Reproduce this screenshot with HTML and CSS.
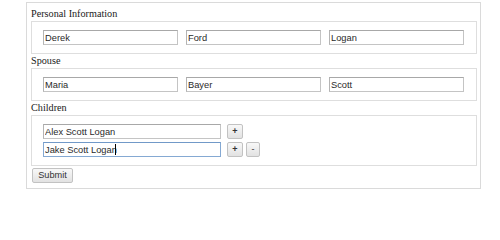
FILE: index.html
```html
<!DOCTYPE html>
<html>
<head>
<meta charset="utf-8">
<link rel="stylesheet" href="styles.css">
</head>
<body>
<form class="form">
  <div class="legend">Personal Information</div>
  <div class="box">
    <div class="row3">
      <input class="field" type="text" value="Derek">
      <input class="field" type="text" value="Ford">
      <input class="field" type="text" value="Logan">
    </div>
  </div>
  <div class="legend">Spouse</div>
  <div class="box">
    <div class="row3">
      <input class="field" type="text" value="Maria">
      <input class="field" type="text" value="Bayer">
      <input class="field" type="text" value="Scott">
    </div>
  </div>
  <div class="legend">Children</div>
  <div class="box children">
    <div class="child-row">
      <input class="field wide" type="text" value="Alex Scott Logan">
      <button class="btn plus" type="button">+</button>
    </div>
    <div class="child-row">
      <span class="caret-wrap">
        <input class="field wide focused" type="text" value="Jake Scott Logan">
        <span class="caret"></span>
      </span>
      <button class="btn plus" type="button">+</button>
      <button class="btn minus" type="button">-</button>
    </div>
  </div>
  <button class="btn submit" type="button">Submit</button>
</form>
</body>
</html>
```

FILE: styles.css
```css
html, body {
  margin: 0;
  padding: 0;
  background: #ffffff;
}

.form {
  display: flex;
  flex-direction: column;
  align-items: flex-start;
  box-sizing: border-box;
  width: 455px;
  margin: 2px 0 0 26px;
  padding: 4px 3px 5px 4px;
  border: 1px solid #dadada;
}

.legend {
  height: 14px;
  line-height: 14px;
  font-family: "Liberation Serif", "Times New Roman", serif;
  font-size: 10.2px;
  color: #1a1a1a;
  white-space: nowrap;
}

.box {
  box-sizing: border-box;
  width: 446px;
  padding: 8px 12px 8px 11px;
  border: 1px solid #dedede;
}

.row3 {
  display: flex;
  gap: 8px;
}

.field {
  box-sizing: border-box;
  width: 135px;
  height: 15px;
  margin: 0;
  padding: 0 1px;
  border: 1px solid #c4c4c4;
  border-top-color: #a8a8a8;
  border-left-color: #b4b4b4;
  border-radius: 0;
  background: #ffffff;
  font-family: "Liberation Sans", Arial, sans-serif;
  font-size: 9.3px;
  color: #2a2a2a;
  outline: none;
}

.children {
  display: flex;
  flex-direction: column;
  gap: 3px;
}

.child-row {
  display: flex;
  align-items: center;
}

.field.wide {
  width: 178px;
}

.field.focused {
  border-color: #85a9d3;
  border-top-color: #7199c8;
}

.caret-wrap {
  position: relative;
  display: flex;
}

.caret {
  position: absolute;
  left: 72px;
  top: 2px;
  width: 1px;
  height: 11px;
  background: #000000;
}

.btn {
  box-sizing: border-box;
  height: 15px;
  margin: 0;
  padding: 0;
  border: 1px solid #c2c2c2;
  border-radius: 2px;
  background: linear-gradient(#f8f8f8, #e2e2e2);
  font-family: "Liberation Sans", Arial, sans-serif;
  color: #333333;
  line-height: 13px;
}

.btn.plus {
  width: 16px;
  margin-left: 6px;
  font-size: 9px;
  font-weight: bold;
}

.btn.minus {
  width: 14px;
  margin-left: 3px;
  font-size: 9px;
}

.btn.submit {
  width: 41px;
  margin: 2px 0 0 1px;
  font-size: 9.2px;
}
```
